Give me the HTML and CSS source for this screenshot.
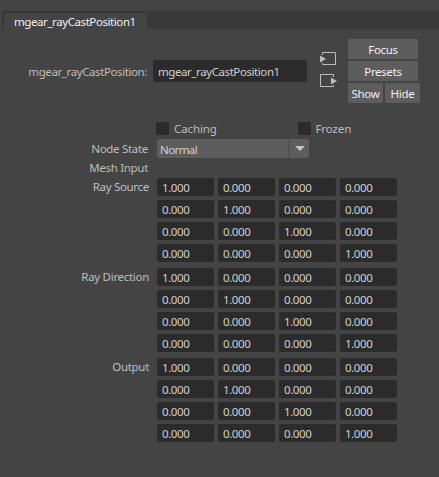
FILE: index.html
```html
<!DOCTYPE html>
<html lang="en">
<head>
<meta charset="utf-8">
<title>Attribute Editor</title>
<link rel="stylesheet" href="styles.css">
</head>
<body>
<div class="tabs"><div class="tab">mgear_rayCastPosition1</div></div>
<header class="head">
  <label class="name-label">mgear_rayCastPosition:</label>
  <div class="name-field">mgear_rayCastPosition1</div>
  <div class="icons">
    <svg width="18" height="14" viewBox="0 0 18 14"><path d="M2.500 3V.5h13v12h-13V11" fill="none" stroke="#bdbdbd"/><path d="M0 3.500L6 7 0 10.500z" fill="#bdbdbd"/></svg>
    <svg width="18" height="14" viewBox="0 0 18 14"><path d="M13.500 3V.5H.5v12h13V11" fill="none" stroke="#bdbdbd"/><path d="M11 3.500L17 7l-6 3.500z" fill="#bdbdbd"/></svg>
  </div>
  <div class="buttons">
    <div class="button wide">Focus</div>
    <div class="button wide">Presets</div>
    <div class="pair"><div class="button">Show</div><div class="button">Hide</div></div>
  </div>
</header>
<main>
  <div class="checks">
    <div class="check"><i class="box"></i><span>Caching</span></div>
    <div class="check"><i class="box"></i><span>Frozen</span></div>
  </div>
  <div class="row state">
    <div class="label">Node State</div>
    <div class="combo"><span>Normal</span><div class="arrow"><svg width="10" height="5" viewBox="0 0 10 5"><path d="M0 0h10L5 5z" fill="#c4c4c4"/></svg></div></div>
  </div>
  <div class="row mesh"><div class="label">Mesh Input</div></div>
  <div class="row group"><div class="label">Ray Source</div><div class="matrix"></div></div>
  <div class="row group"><div class="label">Ray Direction</div><div class="matrix"></div></div>
  <div class="row group"><div class="label">Output</div><div class="matrix"></div></div>
</main>
<script src="matrix.js"></script>
</body>
</html>
```
FILE: styles.css
```css
* { box-sizing: border-box; }
body {
  margin: 0;
  height: 477px;
  overflow: hidden;
  background: #444;
  color: #bebebe;
  font: 11.5px/18px "Noto Sans", "Open Sans", sans-serif;
  letter-spacing: -0.3px;
  white-space: nowrap;
}
svg { display: block; }
.tabs {
  height: 18px;
  margin: 11px 0 0 2px;
  padding: 2px 0 0 2px;
  background: #393939;
}
.tab {
  width: 143px;
  height: 16px;
  padding-left: 10px;
  border-radius: 3px 3px 0 0;
  background: #444;
  color: #f0f0f0;
  letter-spacing: -0.42px;
}
.head {
  display: flex;
  height: 64px;
  margin-top: 10px;
}
.name-label {
  width: 153px;
  padding: 24px 6px 0 0;
  text-align: right;
  letter-spacing: -0.4px;
}
.name-field {
  width: 154px;
  height: 22px;
  margin-top: 21px;
  padding: 3px 5px;
  border-radius: 2px;
  background: #2b2b2b;
  color: #d0d0d0;
  letter-spacing: -0.42px;
}
.icons {
  display: flex;
  flex-direction: column;
  gap: 8px;
  width: 28px;
  margin: 13px 0 0 13px;
}
.buttons {
  display: flex;
  flex-direction: column;
  gap: 2px;
}
.button {
  width: 35px;
  height: 20px;
  border-radius: 1px;
  background: #5d5d5d;
  color: #f0f0f0;
  line-height: 22px;
  text-align: center;
}
.wide { width: 70px; }
.pair { display: flex; gap: 2px; }
.checks {
  display: flex;
  height: 13px;
  margin: 19px 0 4px 156px;
  letter-spacing: -0.1px;
}
.check {
  display: flex;
  align-items: center;
  gap: 5px;
  width: 142px;
}
.box {
  width: 13px;
  height: 13px;
  border-radius: 1px;
  background: #2b2b2b;
}
.row { display: flex; }
.label {
  width: 157px;
  padding-right: 9px;
  text-align: right;
}
.group .label { padding-right: 8px; }
.state { height: 20px; }
.state .label { padding-top: 1px; }
.combo {
  display: flex;
  width: 152px;
  height: 19px;
  border-radius: 2px;
  background: #5d5d5d;
  color: #d0d0d0;
  line-height: 22px;
  letter-spacing: -0.6px;
}
.combo span { width: 131px; padding-left: 3px; }
.arrow {
  width: 21px;
  height: 19px;
  padding: 7px 0 0 5px;
  border-left: 2px solid #525252;
}
.mesh { height: 19px; }
.group { height: 84px; margin-bottom: 6px; }
.matrix {
  display: grid;
  grid-template-columns: repeat(4, 57px);
  grid-auto-rows: 18px;
  gap: 4px;
}
.cell {
  padding-left: 5px;
  border-radius: 2px;
  background: #2b2b2b;
  color: #d0d0d0;
  line-height: 20px;
  letter-spacing: -0.4px;
}
```
FILE: matrix.js
```js
document.querySelectorAll(".matrix").forEach((matrix) => {
  for (let row = 0; row < 4; row++) {
    for (let col = 0; col < 4; col++) {
      const cell = document.createElement("div");
      cell.className = "cell";
      cell.textContent = row === col ? "1.000" : "0.000";
      matrix.append(cell);
    }
  }
});
```
